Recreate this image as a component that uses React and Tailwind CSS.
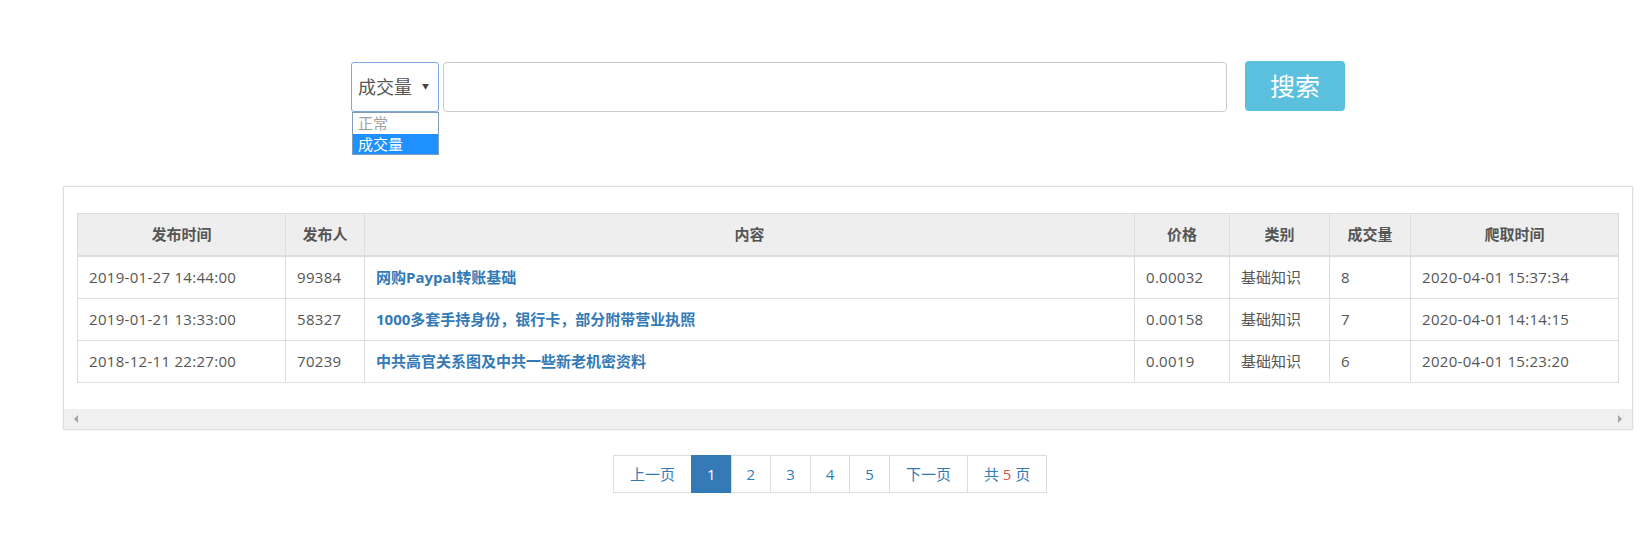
import React from "react";

const rows = [
  {
    time: "2019-01-27 14:44:00",
    user: "99384",
    title: "网购Paypal转账基础",
    price: "0.00032",
    type: "基础知识",
    count: "8",
    crawled: "2020-04-01 15:37:34",
  },
  {
    time: "2019-01-21 13:33:00",
    user: "58327",
    title: "1000多套手持身份，银行卡，部分附带营业执照",
    price: "0.00158",
    type: "基础知识",
    count: "7",
    crawled: "2020-04-01 14:14:15",
  },
  {
    time: "2018-12-11 22:27:00",
    user: "70239",
    title: "中共高官关系图及中共一些新老机密资料",
    price: "0.0019",
    type: "基础知识",
    count: "6",
    crawled: "2020-04-01 15:23:20",
  },
];

const headers = ["发布时间", "发布人", "内容", "价格", "类别", "成交量", "爬取时间"];
const widths = [208, 79, 770, 95, 100, 81, 208];

function Cell({ children, num }) {
  return (
    <td className="border border-[#ddd] px-[11px] py-[10px] text-[15px]">
      <div className={`h-[21px] leading-[21px] whitespace-nowrap ${num ? "tracking-[0.3px]" : ""}`}>
        {children}
      </div>
    </td>
  );
}

export default function App() {
  return (
    <div className="w-[1652px] h-[538px] bg-white text-[#555] font-['Open_Sans','Noto_Sans_CJK_SC',sans-serif] overflow-hidden">
      {/* Search bar */}
      <div className="pt-[61px] pl-[351px] flex items-start">
        <div className="relative mt-px">
          <div className="w-[88px] h-[50px] border border-[#7ea6db] rounded-[3px] bg-white flex items-center pl-[6px] pr-[9px] justify-between">
            <span className="text-[18px] text-[#555]">成交量</span>
            <span className="text-[7px] text-[#444]">▼</span>
          </div>
          {/* open native list */}
          <div className="absolute left-px top-[50px] w-[87px] border border-[#7f9db9] bg-white text-[15px] leading-[20px]">
            <div className="pl-[5px] h-[21px] text-[#a0a0a0]">正常</div>
            <div className="pl-[5px] h-[20px] bg-[#1e90ff] text-white">成交量</div>
          </div>
        </div>
        <input
          type="text"
          className="ml-[4px] mt-px w-[784px] h-[50px] border border-[#ccc] rounded-[4px] outline-none px-3"
        />
        <button className="ml-[18px] w-[100px] h-[50px] bg-[#5bc0de] rounded-[4px] text-white text-[25px] leading-none">
          搜索
        </button>
      </div>

      {/* Table panel */}
      <div className="mt-[74px] ml-[63px] w-[1570px] border border-[#ddd] shadow-[0_0_3px_rgba(0,0,0,0.08)] bg-white">
        <div className="pt-[26px] pb-[26px] px-[13px]">
          <table className="table-fixed border-collapse w-[1542px] border border-[#ddd]">
            <colgroup>
              {widths.map((w, i) => (
                <col key={i} style={{ width: w }} />
              ))}
            </colgroup>
            <thead>
              <tr className="bg-[#eee]">
                {headers.map((h) => (
                  <th
                    key={h}
                    className="border border-[#ddd] border-b-2 py-[10px] text-[15px] font-bold text-[#555] text-center"
                  >
                    <div className="h-[21px] leading-[21px]">{h}</div>
                  </th>
                ))}
              </tr>
            </thead>
            <tbody>
              {rows.map((r) => (
                <tr key={r.user}>
                  <Cell num>{r.time}</Cell>
                  <Cell num>{r.user}</Cell>
                  <Cell>
                    <a href="#" className="text-[#337ab7] font-bold">
                      {r.title}
                    </a>
                  </Cell>
                  <Cell num>{r.price}</Cell>
                  <Cell>{r.type}</Cell>
                  <Cell num>{r.count}</Cell>
                  <Cell num>{r.crawled}</Cell>
                </tr>
              ))}
            </tbody>
          </table>
        </div>
        {/* horizontal scrollbar */}
        <div className="h-[20px] bg-[#f0f0f0] flex items-center justify-between px-[10px]">
          <span className="w-0 h-0 border-y-[4px] border-y-transparent border-r-[4px] border-r-[#a3a3a3]" />
          <span className="w-0 h-0 border-y-[4px] border-y-transparent border-l-[4px] border-l-[#a3a3a3]" />
        </div>
      </div>

      {/* Pagination */}
      <div className="mt-[25px] ml-[613px] flex text-[15px] leading-[20px]">
        <a className="border border-[#ddd] px-[16px] py-[8px] text-[#337ab7]">上一页</a>
        <a className="-ml-px border border-[#337ab7] bg-[#337ab7] px-[15px] py-[8px] text-white">1</a>
        {["2", "3", "4", "5"].map((n) => (
          <a key={n} className="-ml-px border border-[#ddd] px-[15px] py-[8px] text-[#337ab7]">
            {n}
          </a>
        ))}
        <a className="-ml-px border border-[#ddd] px-[16px] py-[8px] text-[#337ab7]">下一页</a>
        <span className="-ml-px border border-[#ddd] px-[16px] py-[8px] text-[#337ab7]">
          共 <span className="text-[#d9534f]">5</span> 页
        </span>
      </div>
    </div>
  );
}
